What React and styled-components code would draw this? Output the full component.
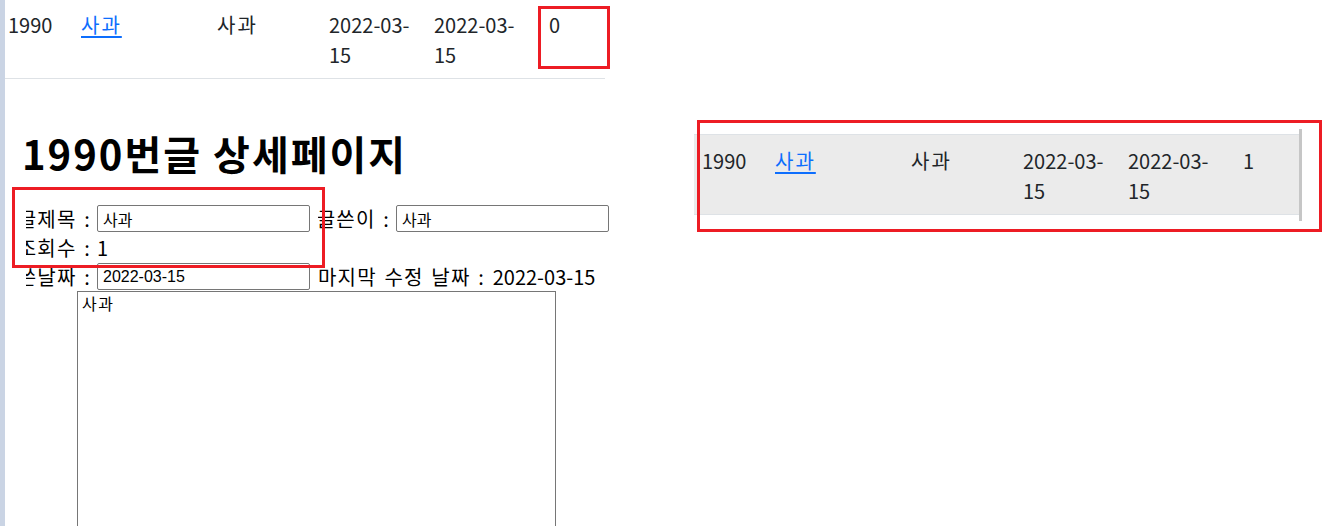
import React from 'react';
import styled, { createGlobalStyle } from 'styled-components';

const post = {
  id: 1990,
  title: '사과',
  writer: '사과',
  created: '2022-03-15',
  updated: '2022-03-15',
  content: '사과',
};

const GlobalStyle = createGlobalStyle`
  html, body {
    margin: 0;
    padding: 0;
    background: #fff;
  }

  body {
    font-family: "Noto Sans CJK KR", "Noto Sans", sans-serif;
    font-size: 20px;
    line-height: 1.5;
    color: #212529;
    overflow: hidden;
  }
`;

const EdgeBar = styled.div`
  position: fixed;
  left: 0;
  top: 0;
  bottom: 0;
  width: 5px;
  background: #cad4e4;
  z-index: 2;
`;

const Page = styled.div`
  display: flex;
  align-items: flex-start;
  padding-top: 2px;
`;

const LeftPane = styled.div`
  flex: none;
  width: 610px;
`;

const Row = styled.div`
  display: grid;
  grid-template-columns: 73px 136px 112px 105px 115px 64px;
  width: 605px;
  border-bottom: 1px solid #dee2e6;
  border-top: ${props => (props.$dragging ? '1px solid #dee2e6' : 'none')};
  background: ${props => (props.$dragging ? '#ebebeb' : 'transparent')};
`;

const Cell = styled.div`
  padding: ${props => (props.$dragging ? '11px 8px 8px' : '8px')};
  min-width: 0;
  letter-spacing: ${props => (props.$hangul ? '2px' : 'normal')};
`;

const TitleLink = styled.a`
  color: #0d6efd;
  text-decoration: underline;
  text-underline-offset: 3px;
`;

const PostRow = ({ data, views, dragging }) => (
  <Row $dragging={dragging}>
    <Cell $dragging={dragging}>{data.id}</Cell>
    <Cell $dragging={dragging} $hangul>
      <TitleLink href="#">{data.title}</TitleLink>
    </Cell>
    <Cell $dragging={dragging} $hangul>{data.writer}</Cell>
    <Cell $dragging={dragging}>{data.created}</Cell>
    <Cell $dragging={dragging}>{data.updated}</Cell>
    <Cell $dragging={dragging}>{views}</Cell>
  </Row>
);

const Detail = styled.section`
  padding-left: 22px;
`;

const Heading = styled.h1`
  margin: 50px 0 27px;
  font-size: 40px;
  font-weight: 700;
  line-height: 1.2;
  letter-spacing: 2px;
  color: #000;
`;

const Form = styled.form`
  margin-left: 4px;
  color: #000;
  font-size: 20px;
`;

const FormRow = styled.div`
  display: flex;
  align-items: center;
  height: 29px;
`;

const Field = styled.div`
  display: flex;
  align-items: center;
  margin-right: 8px;
`;

const Label = styled.label`
  flex: none;
  display: flex;
  justify-content: flex-end;
  box-sizing: border-box;
  width: ${props => props.$width}px;
  padding-right: 6px;
  overflow: hidden;
  white-space: nowrap;
`;

const LabelText = styled.span`
  letter-spacing: 1.2px;
  word-spacing: 2px;
  white-space: nowrap;
`;

const TextInput = styled.input`
  box-sizing: border-box;
  width: 213px;
  height: 27px;
  padding: 1px 5px;
  border: 1px solid #767676;
  border-radius: 2px;
  font-family: "Liberation Sans", "Noto Sans CJK KR", sans-serif;
  font-size: 16px;
  color: #000;
  background: #fff;
`;

const Value = styled.span`
  white-space: nowrap;
`;

const Content = styled.textarea`
  display: block;
  box-sizing: border-box;
  width: 479px;
  height: 260px;
  margin-left: 51px;
  padding: 2px 4px;
  border: 1px solid #767676;
  font-family: "Noto Sans CJK KR", monospace;
  font-size: 16px;
  letter-spacing: 1.5px;
  line-height: 1.2;
  color: #000;
  resize: none;
`;

const RightPane = styled.div`
  margin-left: 84px;
  margin-top: 127px;
`;

const DragPreview = styled.div`
  padding: 5px 0 6px;
  border-right: 3px solid #c6c6c6;
`;

const Annotation = styled.div`
  position: absolute;
  left: ${props => props.$x}px;
  top: ${props => props.$y}px;
  width: ${props => props.$w}px;
  height: ${props => props.$h}px;
  box-sizing: border-box;
  border: 3px solid #ed1c24;
  pointer-events: none;
  z-index: 3;
`;

export default function App() {
  return (
    <>
      <GlobalStyle />
      <EdgeBar />
      <Page>
        <LeftPane>
          <PostRow data={post} views={0} />
          <Detail>
            <Heading>{post.id}번글 상세페이지</Heading>
            <Form onSubmit={e => e.preventDefault()}>
              <FormRow>
                <Field>
                  <Label $width={71}>
                    <LabelText>글제목 :</LabelText>
                  </Label>
                  <TextInput defaultValue={post.title} />
                </Field>
                <Field>
                  <Label $width={78}>
                    <LabelText>글쓴이 :</LabelText>
                  </Label>
                  <TextInput defaultValue={post.writer} />
                </Field>
              </FormRow>
              <FormRow>
                <Label $width={71}>
                  <LabelText>조회수 :</LabelText>
                </Label>
                <Value>1</Value>
              </FormRow>
              <FormRow>
                <Field>
                  <Label $width={71}>
                    <LabelText>글쓴날짜 :</LabelText>
                  </Label>
                  <TextInput defaultValue={post.created} />
                </Field>
                <Value>
                  <LabelText>마지막 수정 날짜 : </LabelText>
                  {post.updated}
                </Value>
              </FormRow>
              <Content defaultValue={post.content} />
            </Form>
          </Detail>
        </LeftPane>
        <RightPane>
          <DragPreview>
            <PostRow data={post} views={1} dragging />
          </DragPreview>
        </RightPane>
      </Page>
      <Annotation $x={538} $y={6} $w={72} $h={63} />
      <Annotation $x={12} $y={187} $w={313} $h={81} />
      <Annotation $x={697} $y={120} $w={625} $h={112} />
    </>
  );
}
